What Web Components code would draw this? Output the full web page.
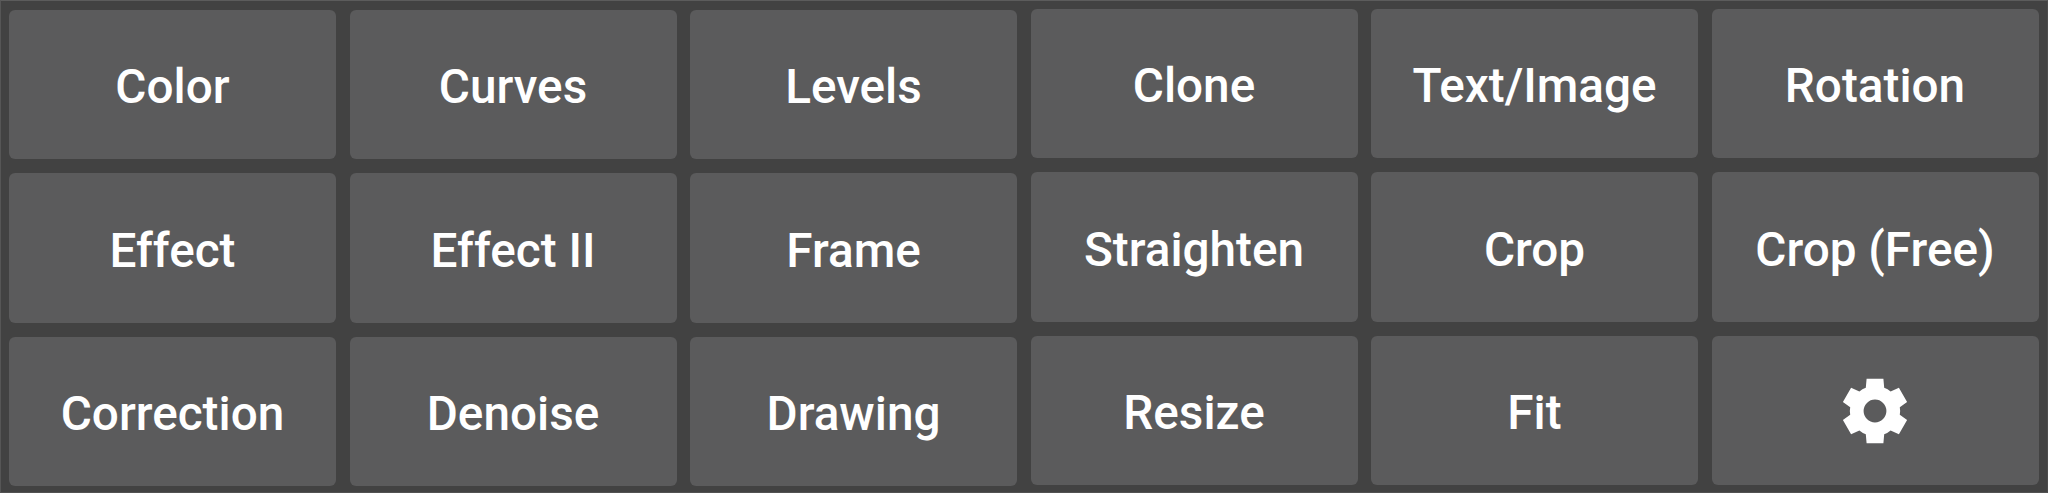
<!DOCTYPE html>
<html lang="en">
<head>
<meta charset="utf-8">
<title>Editor tools</title>
<style>
  body {
    margin: 0;
    background: #424242;
  }
</style>
</head>
<body>
<tool-board>
  <tool-group>
    <tool-button>Color</tool-button>
    <tool-button>Curves</tool-button>
    <tool-button>Levels</tool-button>
    <tool-button>Effect</tool-button>
    <tool-button>Effect II</tool-button>
    <tool-button>Frame</tool-button>
    <tool-button>Correction</tool-button>
    <tool-button>Denoise</tool-button>
    <tool-button>Drawing</tool-button>
  </tool-group>
  <tool-group class="raised">
    <tool-button>Clone</tool-button>
    <tool-button>Text/Image</tool-button>
    <tool-button>Rotation</tool-button>
    <tool-button>Straighten</tool-button>
    <tool-button>Crop</tool-button>
    <tool-button>Crop (Free)</tool-button>
    <tool-button>Resize</tool-button>
    <tool-button>Fit</tool-button>
    <tool-button><gear-icon></gear-icon></tool-button>
  </tool-group>
</tool-board>

<script>
(function () {

  const boardTemplate = document.createElement('template');
  boardTemplate.innerHTML = `
    <style>
      :host {
        display: flex;
        box-sizing: border-box;
        width: 2048px;
        height: 493px;
        gap: 13.5px;
        padding: 8.5px 8px 0 8px;
        border-top: 1px solid #5c5c5c;
        border-left: 1px solid #565656;
        border-right: 1px solid #4c4c4c;
        border-bottom: 1px solid #525252;
        background: #424242;
        font-family: Roboto, sans-serif;
      }
    </style>
    <slot></slot>
    `;

  const groupTemplate = document.createElement('template');
  groupTemplate.innerHTML = `
    <style>
      :host {
        display: grid;
        grid-template-columns: repeat(3, 327px);
        grid-template-rows: repeat(3, 149.5px);
        gap: 14px 13.5px;
      }
      :host(.raised) {
        margin-top: -1px;
      }
    </style>
    <slot></slot>
    `;

  const buttonTemplate = document.createElement('template');
  buttonTemplate.innerHTML = `
    <style>
      :host {
        display: block;
      }
      button {
        display: flex;
        align-items: center;
        justify-content: center;
        box-sizing: border-box;
        width: 100%;
        height: 100%;
        margin: 0;
        padding: 6px 0 0;
        border: 0;
        border-radius: 6px;
        background: #5b5b5c;
        color: #fff;
        font: 500 47.7px/56px Roboto, sans-serif;
        white-space: nowrap;
      }
    </style>
    <button type="button"><slot></slot></button>
    `;

  const gearTemplate = document.createElement('template');
  gearTemplate.innerHTML = `
    <style>
      :host {
        display: block;
        width: 66px;
        height: 66px;
        margin-bottom: 5.5px;
      }
      svg {
        display: block;
      }
    </style>
    <svg width="66" height="66" viewBox="-33 -33 66 66">
      <path fill="#fff" fill-rule="evenodd" d="
        M-9.2-23.3L-8.4-32.3H8.4L9.2-23.3Q12.8-22.1 15.6-19.6
        L23.9-23.3L32.1-9L24.8-3.7Q25.5 0 24.8 3.7
        L32.1 9L23.9 23.3L15.6 19.6Q12.8 22.1 9.2 23.3
        L8.4 32.3H-8.4L-9.2 23.3Q-12.8 22.1-15.6 19.6
        L-23.9 23.3L-32.1 9L-24.8 3.7Q-25.5 0-24.8-3.7
        L-32.1-9L-23.9-23.3L-15.6-19.6Q-12.8-22.1-9.2-23.3Z
        M0-11.4A11.4 11.4 0 1 0 0 11.4A11.4 11.4 0 1 0 0-11.4Z"/>
    </svg>
    `;

  class ToolBoard extends HTMLElement {
    constructor() {
      super();
      this.attachShadow({ mode: 'open' });
      this.shadowRoot.appendChild(boardTemplate.content.cloneNode(true));
    }
  }

  class ToolGroup extends HTMLElement {
    constructor() {
      super();
      this.attachShadow({ mode: 'open' });
      this.shadowRoot.appendChild(groupTemplate.content.cloneNode(true));
    }
  }

  class ToolButton extends HTMLElement {
    constructor() {
      super();
      this.attachShadow({ mode: 'open' });
      this.shadowRoot.appendChild(buttonTemplate.content.cloneNode(true));
    }
  }

  class GearIcon extends HTMLElement {
    constructor() {
      super();
      this.attachShadow({ mode: 'open' });
      this.shadowRoot.appendChild(gearTemplate.content.cloneNode(true));
    }
  }

  customElements.define('tool-board', ToolBoard);
  customElements.define('tool-group', ToolGroup);
  customElements.define('tool-button', ToolButton);
  customElements.define('gear-icon', GearIcon);

})();
</script>
</body>
</html>
